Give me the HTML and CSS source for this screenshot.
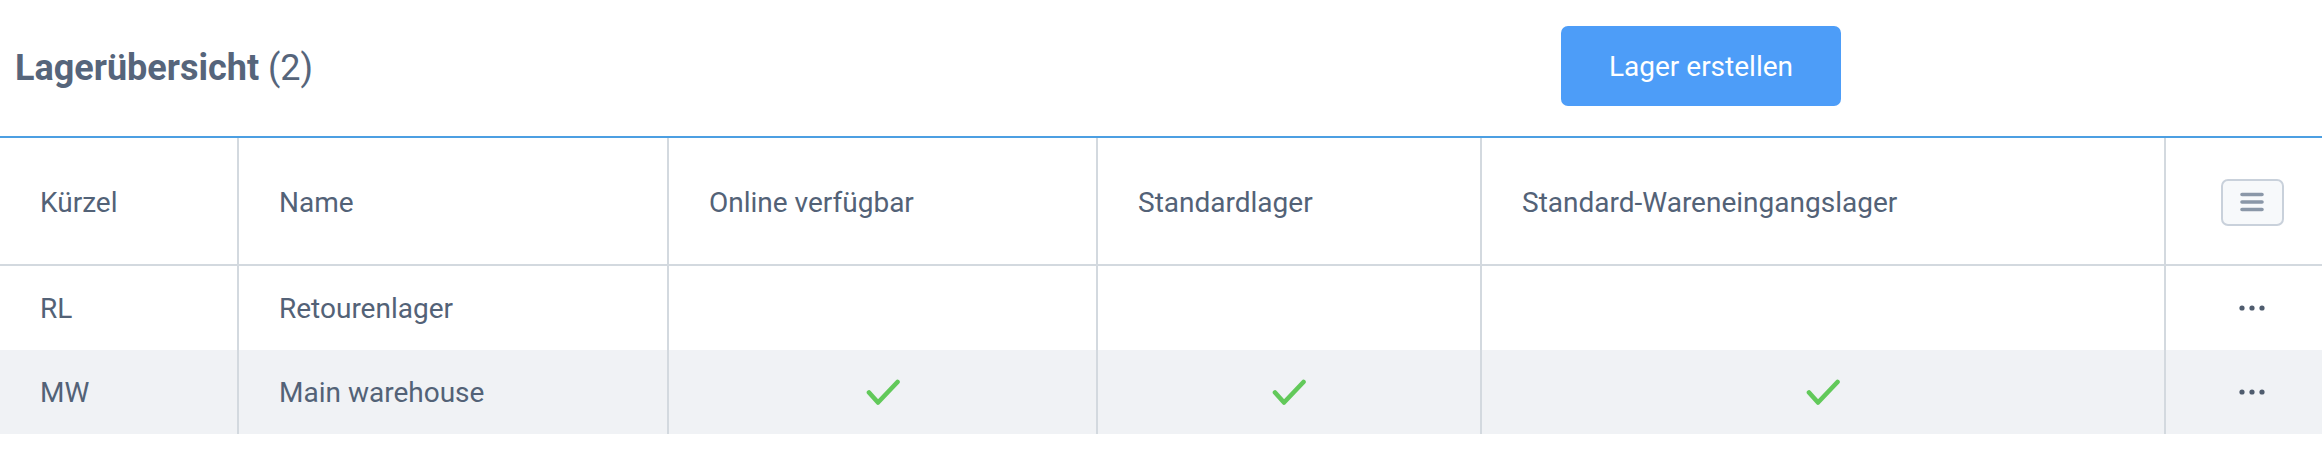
FILE: index.html
```html
<!DOCTYPE html>
<html lang="de">
<head>
<meta charset="utf-8">
<title>Lagerübersicht</title>
<link rel="stylesheet" href="styles.css">
</head>
<body>
<div class="page">
  <header class="topbar">
    <h1 class="title"><span class="title-main">Lagerübersicht</span> <span class="title-count">(2)</span></h1>
    <button class="btn-primary" type="button">Lager erstellen</button>
  </header>
  <div class="grid">
    <div class="cell head first">Kürzel</div>
    <div class="cell head">Name</div>
    <div class="cell head">Online verfügbar</div>
    <div class="cell head">Standardlager</div>
    <div class="cell head">Standard-Wareneingangslager</div>
    <div class="cell head actions">
      <button class="menu-btn" type="button" aria-label="Spalten">
        <svg width="24" height="20" viewBox="0 0 24 20"><path d="M2 2.5H22M2 10H22M2 17.5H22" stroke="#8a97a8" stroke-width="3.6" stroke-linecap="round" fill="none"/></svg>
      </button>
    </div>

    <div class="cell first">RL</div>
    <div class="cell">Retourenlager</div>
    <div class="cell center"></div>
    <div class="cell center"></div>
    <div class="cell center"></div>
    <div class="cell actions">
      <svg class="dots" width="26" height="6" viewBox="0 0 26 6"><circle cx="3" cy="3" r="2.6"/><circle cx="13" cy="3" r="2.6"/><circle cx="23" cy="3" r="2.6"/></svg>
    </div>

    <div class="cell first alt">MW</div>
    <div class="cell alt">Main warehouse</div>
    <div class="cell center alt"><svg class="check" width="34" height="26" viewBox="0 0 34 26"><path d="M3 13.5L12 23.5L31.5 3" /></svg></div>
    <div class="cell center alt"><svg class="check" width="34" height="26" viewBox="0 0 34 26"><path d="M3 13.5L12 23.5L31.5 3" /></svg></div>
    <div class="cell center alt"><svg class="check" width="34" height="26" viewBox="0 0 34 26"><path d="M3 13.5L12 23.5L31.5 3" /></svg></div>
    <div class="cell actions alt">
      <svg class="dots" width="26" height="6" viewBox="0 0 26 6"><circle cx="3" cy="3" r="2.6"/><circle cx="13" cy="3" r="2.6"/><circle cx="23" cy="3" r="2.6"/></svg>
    </div>
  </div>
</div>
</body>
</html>
```
FILE: styles.css
```css
html, body {
  margin: 0;
  padding: 0;
  background: #ffffff;
}

body {
  font-family: Roboto, "Liberation Sans", Arial, sans-serif;
  color: #536277;
}

.page {
  width: 2322px;
}

.topbar {
  display: flex;
  align-items: center;
  height: 136px;
  padding: 0 481px 0 15px;
  border-bottom: 2px solid #4c9fe2;
}

.title {
  flex: 1;
  margin: 0;
  font-size: 36px;
  line-height: 1;
  color: #56657b;
  white-space: nowrap;
}

.title-main {
  font-weight: 700;
}

.title-count {
  font-weight: 400;
}

.btn-primary {
  width: 280px;
  height: 80px;
  border: none;
  border-radius: 7px;
  background: #4d9df8;
  color: #ffffff;
  font-family: inherit;
  font-size: 28px;
  font-weight: 400;
  padding: 0;
  margin-bottom: 4px;
}

.grid {
  display: grid;
  grid-template-columns: 237px 430px 429px 384px 684px 158px;
  grid-template-rows: 128px 84px 84px;
}

.cell {
  display: flex;
  align-items: center;
  padding-left: 40px;
  border-left: 2px solid #d3d9df;
  font-size: 28px;
  color: #536277;
  white-space: nowrap;
}

.cell.first {
  border-left: none;
  padding-left: 40px;
}

.cell.head {
  border-bottom: 2px solid #d3d9df;
  padding-top: 2px;
}

.cell.center {
  justify-content: center;
  padding-left: 0;
}

.cell.actions {
  justify-content: center;
  padding-left: 16px;
}

.cell.alt {
  background: #f0f2f5;
}

.menu-btn {
  width: 63px;
  height: 47px;
  display: flex;
  align-items: center;
  justify-content: center;
  padding: 0;
  border: 2px solid #c9d1db;
  border-radius: 7px;
  background: #f7f9fb;
}

.dots {
  fill: #4f5c6e;
}

.check {
  fill: none;
  stroke: #62c95a;
  stroke-width: 4.6;
  stroke-linecap: round;
  stroke-linejoin: round;
}
```
